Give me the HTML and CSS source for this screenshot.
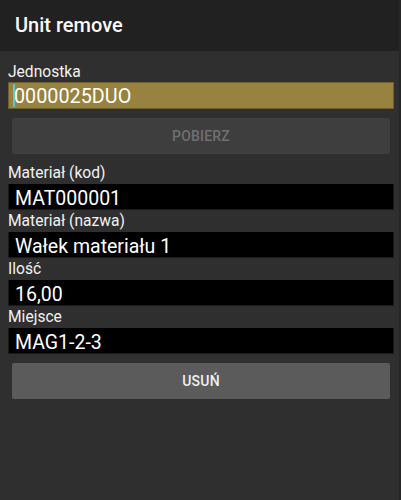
FILE: index.html
```html
<!DOCTYPE html>
<html lang="pl">
<head>
    <meta charset="UTF-8">
    <title>Unit remove</title>
    <link rel="stylesheet" href="styles.css">
</head>
<body>
    <div class="appbar">Unit remove</div>
    <div class="content">
        <div class="label">Jednostka</div>
        <div class="field active"><span class="cursor"></span>0000025DUO</div>
        <button class="btn disabled">POBIERZ</button>

        <div class="label">Materiał (kod)</div>
        <div class="field">MAT000001</div>
        <div class="label">Materiał (nazwa)</div>
        <div class="field">Wałek materiału 1</div>
        <div class="label">Ilość</div>
        <div class="field">16,00</div>
        <div class="label">Miejsce</div>
        <div class="field">MAG1-2-3</div>
        <button class="btn">USUŃ</button>
    </div>
</body>
</html>
```
FILE: styles.css
```css
html, body { margin: 0; padding: 0; height: 100%; }
body { font-family: Roboto, "Noto Sans", sans-serif; background: #2f2f2f; color: #fff; border-right: 2px solid #262626; box-sizing: border-box; }
.appbar { height: 51px; box-sizing: border-box; padding: 0 0 2px 15px; background: #212121; display: flex; align-items: center; font-size: 20px; font-weight: 500; color: #fafafa; }
.content { padding: 9px 5px 0 8px; }
.label { height: 22px; line-height: 22px; font-size: 15.6px; color: #f2f2f2; }
.label:first-child { line-height: 24px; }
.field { height: 26px; line-height: 26px; padding: 2px 0 0 6px; background: #000; border: 1px solid #1a1a1a; border-top: 0; box-sizing: border-box; font-size: 19.5px; color: #fff; position: relative; white-space: nowrap; overflow: hidden; }
.field.active { height: 27px; line-height: 26px; padding: 1px 0 0 5px; background: #978240; border: 1px solid #6e5f32; font-size: 19.8px; }
.cursor { position: absolute; left: 4px; top: 1px; bottom: 1px; width: 2px; background: #5ec8cc; }
.btn { display: block; width: calc(100% - 8px); margin: 9px 4px 8px; height: 36px; border: 0; border-radius: 2px; background: #5b5b5b; color: #f0f0f0; font-family: Roboto, sans-serif; font-size: 14px; font-weight: 500; letter-spacing: 0.2px; }
.btn.disabled { background: #3e3e3e; color: #707070; }
```
